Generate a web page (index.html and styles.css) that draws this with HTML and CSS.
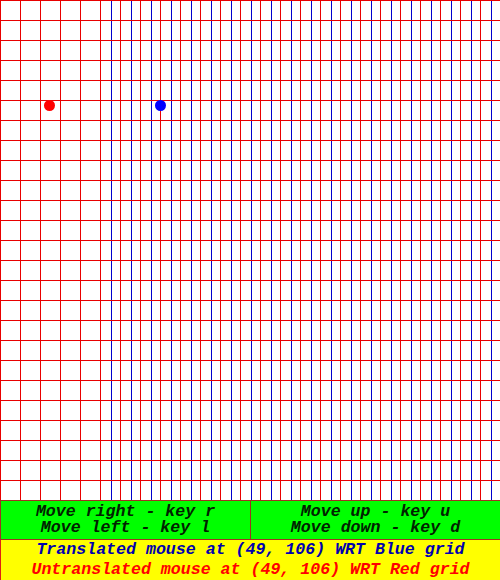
FILE: index.html
```html
<!DOCTYPE html>
<html lang="en">
<head>
    <meta charset="UTF-8">
    <title>Translated Grid</title>
    <link rel="stylesheet" href="styles.css">
</head>
<body>
    <!-- Grid canvas: blue grid translated by 111px, red grid untranslated drawn on top -->
    <div class="board">
        <div class="blue-grid"></div>
        <span class="dot dot-red" style="left: 44px; top: 100px;"></span>
        <span class="dot dot-blue" style="left: 155px; top: 100px;"></span>
    </div>

    <div class="keys">
        <div class="keys-col">
            <span>Move right - key r</span>
            <span>Move left - key l</span>
        </div>
        <div class="keys-col keys-right">
            <span>Move up - key u</span>
            <span>Move down - key d</span>
        </div>
    </div>

    <div class="status">
        <div class="status-blue">Translated mouse at (49, 106) WRT Blue grid</div>
        <div class="status-red">Untranslated mouse at (49, 106) WRT Red grid</div>
    </div>
</body>
</html>
```

FILE: styles.css
```css
body {
    margin: 0;
    width: 500px;
    background: white;
    font-family: "Liberation Mono", "Courier New", monospace;
    font-weight: bold;
    font-style: italic;
    font-size: 16.6px;
}

.board {
    position: relative;
    height: 500px;
    overflow: hidden;
    background: white;
}

.blue-grid {
    margin-left: 111px;
    height: 500px;
    background-image: linear-gradient(90deg, #0000cc 0, #0000cc 1px, transparent 1px, transparent 100%);
    background-size: 20px 100%;
}

.board::after {
    content: "";
    position: absolute;
    left: 0;
    top: 0;
    width: 500px;
    height: 500px;
    background-image:
        linear-gradient(180deg, #e80000 0, #e80000 1px, transparent 1px, transparent 100%),
        linear-gradient(90deg, #e80000 0, #e80000 1px, transparent 1px, transparent 100%);
    background-size: 20px 20px;
}

.dot {
    position: absolute;
    width: 11px;
    height: 11px;
    border-radius: 50%;
    z-index: 1;
}

.dot-red {
    background: #ff0000;
}

.dot-blue {
    background: #0000ff;
}

.keys {
    display: flex;
    height: 40px;
    box-sizing: border-box;
    background: #00ff00;
    border-top: 1px solid #a03020;
    border-left: 1px solid #a03020;
    border-bottom: 1px solid #a03020;
    color: #002200;
}

.keys-col {
    flex: 1;
    display: flex;
    flex-direction: column;
    justify-content: center;
    align-items: center;
    line-height: 16px;
    white-space: nowrap;
}

.keys-right {
    border-left: 1px solid #a03020;
}

.status {
    height: 40px;
    background: #ffff00;
    border-left: 1px solid #e02010;
    box-sizing: border-box;
    text-align: center;
    line-height: 20px;
    white-space: nowrap;
}

.status-blue {
    color: #0000b0;
}

.status-red {
    color: #ff0000;
}
```
